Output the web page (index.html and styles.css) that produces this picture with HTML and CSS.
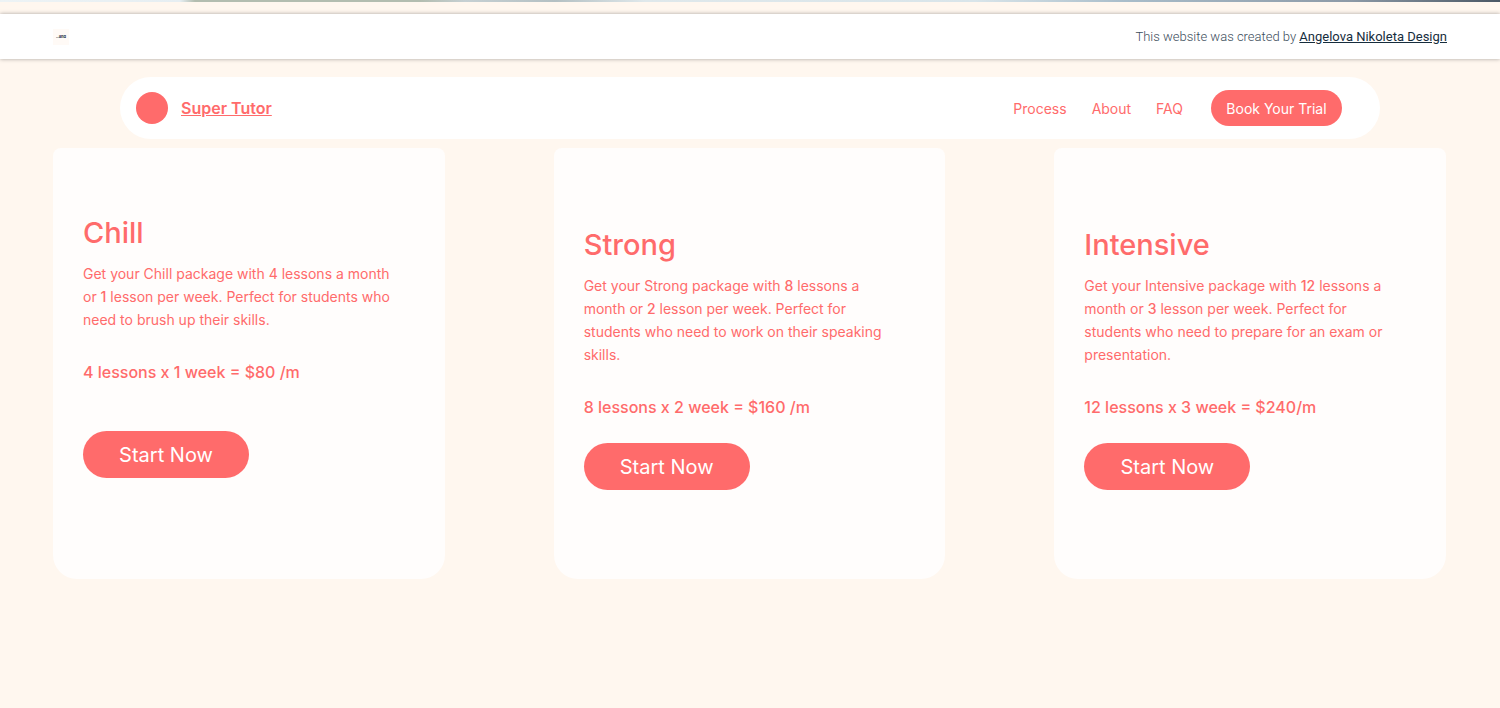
FILE: index.html
```html
<!DOCTYPE html>
<html lang="en">
<head>
    <meta charset="UTF-8">
    <meta name="viewport" content="width=device-width, initial-scale=1.0">
    <title>Super Tutor</title>
    <link rel="stylesheet" href="styles.css">
</head>
<body>
    <div class="photo-edge"></div>
    <div class="credit-bar">
        <div class="credit-logo">..and</div>
        <p class="credit-text">This website was created by <a href="#">Angelova Nikoleta Design</a></p>
    </div>

    <header class="navbar">
        <span class="brand-dot"></span>
        <a class="brand" href="#">Super Tutor</a>
        <nav class="nav-links">
            <a href="#process">Process</a>
            <a href="#about">About</a>
            <a href="#faq">FAQ</a>
        </nav>
        <button class="btn btn-trial" type="button">Book Your Trial</button>
    </header>

    <main class="packages">
        <section class="card card-short">
            <h2>Chill</h2>
            <p class="description">Get your Chill package with 4 lessons a month or <b>1</b> lesson per week. Perfect for students who need to brush up their skills.</p>
            <p class="price">4 lessons x 1 week = $80 /m</p>
            <button class="btn btn-start" type="button">Start Now</button>
        </section>
        <section class="card">
            <h2>Strong</h2>
            <p class="description">Get your Strong package with <b>8</b> lessons a month or <b>2</b> lesson per week. Perfect for students who need to work on their speaking skills.</p>
            <p class="price">8 lessons x 2 week = $160 /m</p>
            <button class="btn btn-start" type="button">Start Now</button>
        </section>
        <section class="card">
            <h2>Intensive</h2>
            <p class="description">Get your Intensive package with <b>12</b> lessons a month or <b>3</b> lesson per week. Perfect for students who need to prepare for an exam or presentation.</p>
            <p class="price">12 lessons x 3 week = $240/m</p>
            <button class="btn btn-start" type="button">Start Now</button>
        </section>
    </main>
</body>
</html>
```
FILE: styles.css
```css
* {
    box-sizing: border-box;
}
body {
    margin: 0;
    background: #fff7ef;
    color: #ff6b6b;
    font-family: Inter, "Open Sans", sans-serif;
}
h2, p {
    margin: 0;
}
.photo-edge {
    height: 2px;
    background: linear-gradient(to right, #edf3f5 0, #e6eef2 12%, #b3bdb0 13%, #b3bdb0 28%, #c6d0d3 31%, #b4c0c3 37%, #dfe8eb 43%, #d9e5ea 65%, #a9bdca 75%, #8d9aa7 90%, #4b5865 100%);
}
.credit-bar {
    display: flex;
    align-items: center;
    justify-content: space-between;
    height: 45px;
    margin-top: 12px;
    padding: 0 53px;
    background: #fff;
    box-shadow: 0 0 4px rgba(0, 0, 0, 0.35);
}
.credit-logo {
    width: 16px;
    height: 16px;
    background: #fffaf6;
    color: #162d3d;
    font-size: 4px;
    font-weight: bold;
    line-height: 16px;
    text-align: center;
}
.credit-text {
    color: #3b4d5b;
    font-family: Roboto, "Liberation Sans", sans-serif;
    font-size: 13px;
    font-weight: 300;
    line-height: 18px;
}
.credit-text a {
    color: #162d3d;
    font-weight: 400;
}
.navbar {
    display: flex;
    align-items: center;
    width: 84%;
    height: 62px;
    margin: 18px auto 9px;
    padding: 0 38px 0 16px;
    background: #fff;
    border-radius: 31px;
}
.brand-dot {
    width: 32px;
    height: 32px;
    margin-right: 13px;
    background: #ff6b6b;
    border-radius: 50%;
}
.brand {
    color: #ff6b6b;
    font-size: 16px;
    font-weight: 600;
}
.nav-links {
    display: flex;
    gap: 25px;
    margin: 0 28px 0 auto;
}
.nav-links a {
    color: #ff6b6b;
    font-size: 14px;
    text-decoration: none;
}
.btn {
    border: none;
    background: #ff6b6b;
    color: #fff;
    font-family: inherit;
    cursor: pointer;
}
.btn-trial {
    width: 131px;
    height: 36px;
    padding: 0;
    border-radius: 18px;
    font-size: 14px;
}
.packages {
    display: grid;
    grid-template-columns: repeat(3, 1fr);
    gap: 109px;
    padding: 0 54px 0 53px;
}
.card {
    min-height: 431px;
    padding: 77px 50px 40px 30px;
    background: #fffdfc;
    border-radius: 8px 8px 24px 24px;
}
.card-short {
    padding-top: 65px;
}
.card h2 {
    font-size: 29px;
    font-weight: 500;
    line-height: 40px;
}
.description {
    margin-top: 9px;
    font-size: 14px;
    line-height: 23px;
}
.description b {
    font-weight: 500;
}
.price {
    margin-top: 29px;
    font-size: 16px;
    font-weight: 500;
    line-height: 24px;
}
.btn-start {
    width: 166px;
    height: 47px;
    margin-top: 24px;
    border-radius: 24px;
    font-size: 20px;
}
.card-short .btn-start {
    margin-top: 47px;
}
```
